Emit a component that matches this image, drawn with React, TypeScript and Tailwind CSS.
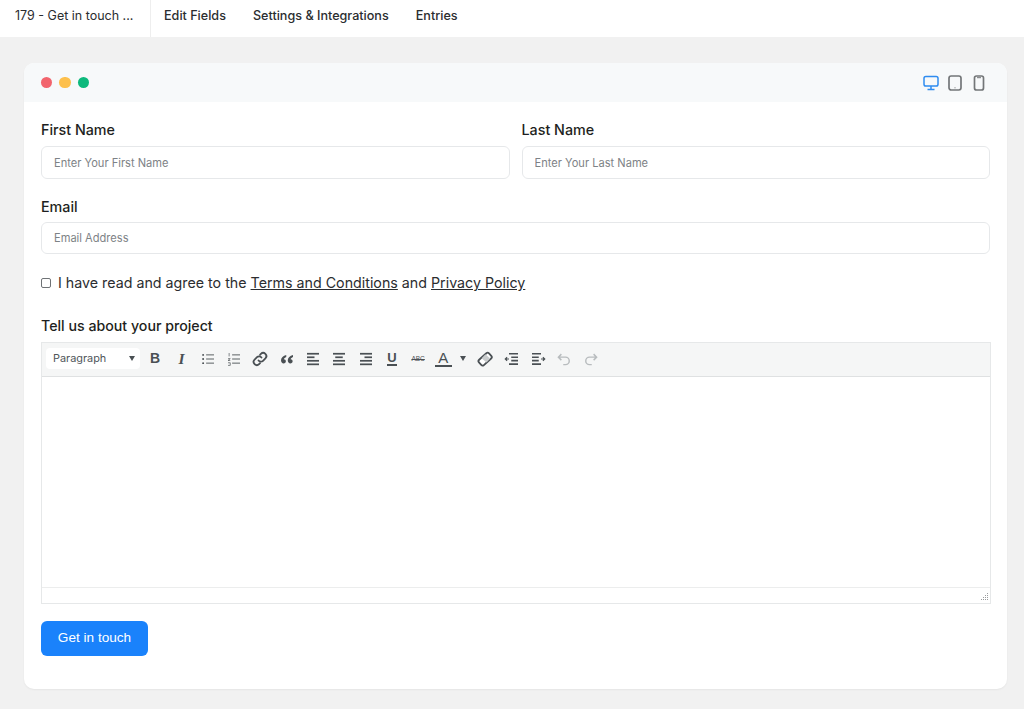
import type { ReactNode } from "react";

const ink = "#4a5054";
const faded = "#b8bcbe";

function Cell({ children, className = "w-[26.300px]" }: { children: ReactNode; className?: string }) {
  return <div className={`flex h-full shrink-0 items-center justify-center ${className}`}>{children}</div>;
}

function ToolIcon({ children, color = ink }: { children: ReactNode; color?: string }) {
  return (
    <Cell>
      <svg width="18" height="18" viewBox="0 0 24 24" fill="none" stroke={color} strokeWidth="1.700" strokeLinecap="round">
        {children}
      </svg>
    </Cell>
  );
}

// rows of the align icons: start x and length per line
function Lines({ rows }: { rows: [number, number][] }) {
  return (
    <ToolIcon>
      {rows.map(([x, w], i) => (
        <path key={i} d={`M${x} ${5 + i * 4.700}h${w}`} strokeLinecap="butt" strokeWidth="2.300" />
      ))}
    </ToolIcon>
  );
}

function Caret() {
  return <span className="h-0 w-0 border-x-[3.500px] border-t-[5px] border-x-transparent border-t-[#4a5054]" />;
}

function Toolbar() {
  return (
    <div className="flex h-[34px] items-center border-b border-[#dfe1e2] bg-[#f5f6f6] pb-[2px] pl-[4px]">
      <div className="mr-[2px] flex h-[21px] w-[94px] shrink-0 items-center justify-between rounded-sm bg-white pl-[7px] pr-[5px] text-[10.900px] text-[#50565a]">
        <span>Paragraph</span>
        <Caret />
      </div>
      <Cell>
        <span className="font-['Liberation_Sans',sans-serif] text-[14px] font-bold text-[#4a5054]">B</span>
      </Cell>
      <Cell>
        <span className="font-['Liberation_Serif',serif] text-[15.500px] font-bold italic text-[#4a5054]">I</span>
      </Cell>
      <ToolIcon>
        <circle cx="5.500" cy="6.500" r="1.300" fill={ink} stroke="none" />
        <circle cx="5.500" cy="12" r="1.300" fill={ink} stroke="none" />
        <circle cx="5.500" cy="17.500" r="1.300" fill={ink} stroke="none" />
        <path d="M9.500 6.500H20M9.500 12H20M9.500 17.500H20" strokeLinecap="butt" strokeWidth="1.200" />
      </ToolIcon>
      <ToolIcon>
        <path d="M5.500 4v4.500M4 11.500h3l-3 2.500h3M4 17h3v3.500H4" strokeWidth="0.900" strokeLinecap="butt" />
        <path d="M9.500 6.500H20M9.500 12H20M9.500 17.500H20" strokeLinecap="butt" strokeWidth="1.200" />
      </ToolIcon>
      <ToolIcon>
        <path d="M10 14a4 4 0 0 0 6 .4l3.200-3.200a4.200 4.200 0 0 0-6-6L12 6.400" strokeWidth="2.400" />
        <path d="M14 10a4 4 0 0 0-6-.4l-3.200 3.200a4.200 4.200 0 0 0 6 6l1.200-1.200" strokeWidth="2.400" />
      </ToolIcon>
      <ToolIcon>
        <path
          fill={ink}
          stroke="none"
          d="M11 6.500C7 7.500 4 10 4 13.800 4 16.400 5.500 18 7.500 18c1.700 0 3-1.300 3-3 0-1.600-1.100-2.800-2.700-2.800.4-1.300 1.500-2.400 3.200-3zM20 6.500c-4 1-7 3.500-7 7.300 0 2.600 1.500 4.200 3.500 4.200 1.700 0 3-1.300 3-3 0-1.600-1.100-2.800-2.700-2.800.4-1.300 1.500-2.400 3.200-3z"
        />
      </ToolIcon>
      <Lines rows={[[4, 16], [4, 10], [4, 16], [4, 16]]} />
      <Lines rows={[[4, 16], [7, 10], [4, 16], [4, 16]]} />
      <Lines rows={[[4, 16], [10, 10], [4, 16], [4, 16]]} />
      <Cell>
        <span className="border-b-2 border-[#4a5054] font-['Liberation_Sans',sans-serif] text-[13px] font-bold leading-[12px] text-[#4a5054]">U</span>
      </Cell>
      <Cell>
        <span className="font-['Liberation_Sans',sans-serif] text-[6.500px] text-[#4a5054] line-through">ABC</span>
      </Cell>
      <Cell className="w-[24px]">
        <span className="w-[17px] border-b-2 border-[#4a5054] text-center font-['Liberation_Sans',sans-serif] text-[15px] leading-[14px] text-[#4a5054]">A</span>
      </Cell>
      <Cell className="mr-[2px] w-[15px]">
        <Caret />
      </Cell>
      <ToolIcon>
        <rect x="3" y="7.500" width="18" height="9.500" rx="2.500" transform="rotate(-42 12 12)" fill="#ffffff" strokeWidth="2.400" />
        <path d="M12.500 5.500l6.500 5.800-5 5.500-6.500-5.800z" fill="#c9cccd" stroke="none" />
      </ToolIcon>
      <ToolIcon>
        <path d="M8 5h12M11 9.600h9M11 14.200h9M8 18.800h12" strokeWidth="2.200" strokeLinecap="butt" />
        <path d="M8 12H3M5.500 9.700L3 12l2.500 2.300" strokeWidth="1.500" strokeLinecap="butt" />
      </ToolIcon>
      <ToolIcon>
        <path d="M4 5h12M4 9.600h9M4 14.200h9M4 18.800h12" strokeWidth="2.200" strokeLinecap="butt" />
        <path d="M16 12h5M18.500 9.700L21 12l-2.500 2.300" strokeWidth="1.500" strokeLinecap="butt" />
      </ToolIcon>
      <ToolIcon color={faded}>
        <path d="M8.500 5.500L4.500 9.500l4 4M4.500 9.500H14a5 5 0 0 1 0 10h-3" strokeWidth="1.900" strokeLinecap="butt" />
      </ToolIcon>
      <ToolIcon color={faded}>
        <path d="M15.500 5.500l4 4-4 4M19.500 9.500H10a5 5 0 0 0 0 10h3" strokeWidth="1.900" strokeLinecap="butt" />
      </ToolIcon>
    </div>
  );
}

function Field({ label, placeholder, compact }: { label: string; placeholder: string; compact?: boolean }) {
  return (
    <label className="flex min-w-0 flex-1 flex-col">
      <span className={compact ? "h-[25px] text-[14.300px] font-medium leading-[20px] text-[#1e1f21]" : "h-[26px] text-[14.300px] font-medium leading-[20px] text-[#1e1f21]"}>
        {label}
      </span>
      <input
        placeholder={placeholder}
        className={
          compact
            ? "h-[32px] w-full rounded-[6px] border border-[#e6e8ea] bg-white px-[12px] text-[11.100px] outline-none placeholder:text-[#7d8286]"
            : "h-[33px] w-full rounded-[6px] border border-[#e6e8ea] bg-white px-[12px] text-[11.100px] outline-none placeholder:text-[#7d8286]"
        }
      />
    </label>
  );
}

export default function App() {
  return (
    <div className="flex h-[709px] flex-col overflow-hidden bg-[#f1f1f1] font-['Inter',sans-serif] text-[#1e1f21]">
      <nav className="flex h-[37px] shrink-0 items-center bg-white text-[12.600px] font-medium text-[#2b2d30]">
        <div className="flex h-full w-[151px] items-center border-r border-[#eeeeee] pb-[4px] pl-[15px] text-[12.500px] font-normal">179 - Get in touch ...</div>
        <div className="flex gap-[27px] pb-[4px] pl-[13px]">
          <span>Edit Fields</span>
          <span>Settings &amp; Integrations</span>
          <span>Entries</span>
        </div>
      </nav>

      <main className="ml-[24px] mt-[26px] flex h-[626px] w-[983px] flex-col overflow-hidden rounded-[10px] bg-white shadow-[0_1px_2px_rgba(0,0,0,0.05)]">
        <div className="flex h-[39px] shrink-0 items-center justify-between bg-[#f7f9fa] pl-[16.500px] pr-[20px]">
          <div className="flex gap-[7px]">
            <span className="size-[11.500px] rounded-full bg-[#f2646d]" />
            <span className="size-[11.500px] rounded-full bg-[#fdc04c]" />
            <span className="size-[11.500px] rounded-full bg-[#0db97c]" />
          </div>
          <div className="flex items-center gap-[8px]">
            <svg width="16" height="16" viewBox="0 0 16 16" fill="none" stroke="#2f8cf0" strokeWidth="1.500">
              <rect x="1" y="1.500" width="14" height="9.500" rx="1.800" />
              <path d="M8 11v3M4.500 14.500h7" />
            </svg>
            <svg width="16" height="16" viewBox="0 0 16 16" fill="none" stroke="#737678" strokeWidth="1.700">
              <rect x="2" y="1" width="12" height="14" rx="2.200" />
              <path d="M7.500 12.800h1" strokeWidth="1" />
            </svg>
            <svg width="16" height="16" viewBox="0 0 16 16" fill="none" stroke="#737678" strokeWidth="1.700">
              <rect x="3.500" y="1" width="9" height="14" rx="2" />
              <path d="M6 2.700h4" strokeWidth="1" />
            </svg>
          </div>
        </div>

        <form className="flex flex-col pl-[17px] pr-[17px] pt-[18px]">
          <div className="flex gap-[12px]">
            <Field label="First Name" placeholder="Enter Your First Name" />
            <Field label="Last Name" placeholder="Enter Your Last Name" />
          </div>
          <div className="mt-[18px] flex">
            <Field compact label="Email" placeholder="Email Address" />
          </div>
          <label className="mt-[18px] flex h-[22px] items-center gap-[7px] text-[14.250px] text-[#2b2d30]">
            <input type="checkbox" className="size-[10px] appearance-none rounded-[2px] border border-[#6f7376] bg-white" />
            <span>
              I have read and agree to the <span className="underline">Terms and Conditions</span> and{" "}
              <span className="underline">Privacy Policy</span>
            </span>
          </label>
          <div className="mt-[22px] h-[26px] text-[14.200px] font-medium leading-[20px]">Tell us about your project</div>

          <div className="-mr-px flex h-[262px] flex-col border border-[#e6e8e9]">
            <Toolbar />
            <div className="flex-1 bg-white" />
            <div className="flex h-[16px] shrink-0 items-end justify-end border-t border-[#eceded] bg-white pb-[2px] pr-[2px]">
              <svg width="8" height="8" viewBox="0 0 8 8" fill="#9a9c9e">
                <path d="M7 0h1v1H7zM5 2h1v1H5zM7 2h1v1H7zM3 4h1v1H3zM5 4h1v1H5zM7 4h1v1H7zM1 6h1v1H1zM3 6h1v1H3zM5 6h1v1H5zM7 6h1v1H7z" />
              </svg>
            </div>
          </div>

          <button
            type="button"
            className="mt-[17px] h-[35px] w-[107px] rounded-[6px] bg-[#1a82fb] font-['Liberation_Sans',sans-serif] text-[13.600px] text-white"
          >
            Get in touch
          </button>
        </form>
      </main>
    </div>
  );
}
